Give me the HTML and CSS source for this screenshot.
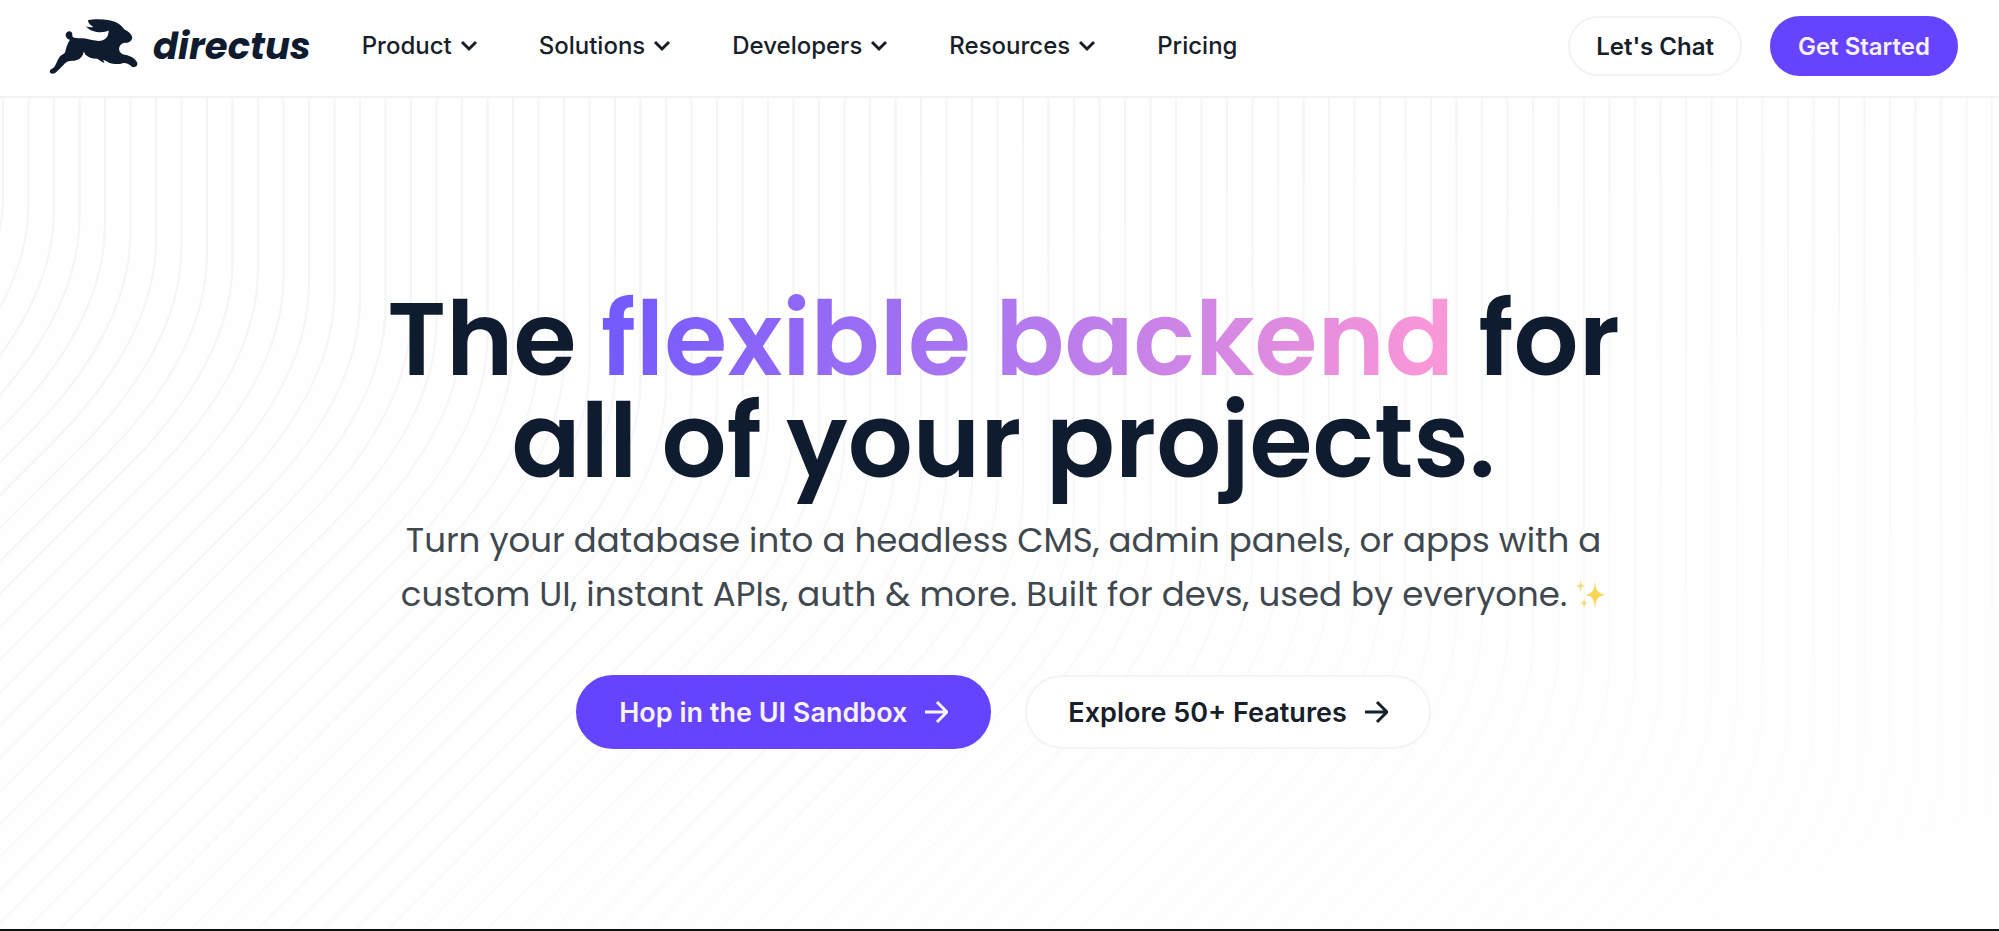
FILE: index.html
```
<!DOCTYPE html>
<html lang="en">
	<head>
		<meta charset="UTF-8" />
		<meta name="viewport" content="width=device-width, initial-scale=1.0" />
		<title>Directus</title>
		<link rel="stylesheet" href="styles.css">
	</head>
	<body>
		<header class="site-header">
			<a class="logo" href="#">
				<svg class="logo-mark" viewBox="50 50 280 175" aria-hidden="true">
					<path d="M173 60 C190 56 216 56 238 60 C262 65 276 76 283 88 C296 94 305 102 307 112 C306 122 298 129 284 128 C274 130 268 137 267 146 C268 157 274 162 283 164 C301 166 316 175 322 188 C324 197 317 203 307 201 C297 192 286 187 276 190 C264 194 248 192 235 187 C229 183 223 181 219 179 C220 183 222 186 223 189 C212 185 207 179 202 176 C188 177 174 172 165 163 L161 154 L158 163 C152 175 142 182 128 182 C114 182 106 186 98 196 L78 216 C70 223 60 222 58 216 C58 210 62 207 68 205 C76 196 78 188 84 176 C90 166 98 163 104 158 C107 145 111 131 119 119 C111 117 106 111 106 104 C107 94 118 90 124 96 C128 101 124 107 128 111 C138 116 152 113 165 115 C183 118 203 126 218 120 C230 115 235 107 236 91 C226 95 214 98 199 95 C185 93 174 87 167 79 C175 81 183 82 189 80 C182 75 174 70 173 60 Z" />
				</svg>
				<span class="logo-text">directus</span>
			</a>
			<nav class="main-nav">
				<button class="nav-item" type="button">
					Product
					<svg class="chevron" viewBox="0 0 18 12" aria-hidden="true"><path d="M2 2 L9 9 L16 2" /></svg>
				</button>
				<button class="nav-item" type="button">
					Solutions
					<svg class="chevron" viewBox="0 0 18 12" aria-hidden="true"><path d="M2 2 L9 9 L16 2" /></svg>
				</button>
				<button class="nav-item" type="button">
					Developers
					<svg class="chevron" viewBox="0 0 18 12" aria-hidden="true"><path d="M2 2 L9 9 L16 2" /></svg>
				</button>
				<button class="nav-item" type="button">
					Resources
					<svg class="chevron" viewBox="0 0 18 12" aria-hidden="true"><path d="M2 2 L9 9 L16 2" /></svg>
				</button>
				<a class="nav-item" href="#">Pricing</a>
			</nav>
			<div class="header-actions">
				<a class="btn btn-outline" href="#">Let's Chat</a>
				<a class="btn btn-primary" href="#">Get Started</a>
			</div>
		</header>

		<main class="hero">
			<svg class="hero-lines" id="hero-lines" aria-hidden="true"></svg>
			<div class="hero-content">
				<h1>The <span class="gradient-text">flexible backend</span> for<br />all of your projects.</h1>
				<p class="hero-sub">
					Turn your database into a headless CMS, admin panels, or apps with a<br />
					custom UI, instant APIs, auth &amp; more. Built for devs, used by everyone.
					<svg class="sparkles" viewBox="0 0 30 30" role="img" aria-label="sparkles">
						<path fill="#f7d65a" d="M19 2 C20 12 21 14 30 16 C21 17 20 20 19 30 C18 20 17 17 9 16 C17 14 18 12 19 2 Z" />
						<path fill="#f0e08a" d="M5 0 C5 5 6 6 9 7 C6 8 5 9 5 14 C4 9 4 8 0 7 C4 6 4 5 5 0 Z" />
						<path fill="#f0e08a" d="M8 19 C9 22 9 23 12 24 C9 25 9 26 8 30 C8 26 7 25 4 24 C7 23 8 22 8 19 Z" />
					</svg>
				</p>
				<div class="hero-actions">
					<a class="btn btn-large btn-primary" href="#">
						Hop in the UI Sandbox
						<svg class="arrow" viewBox="0 0 24 24" aria-hidden="true"><path d="M1 12 H22 M13 2 L23 12 L13 22" /></svg>
					</a>
					<a class="btn btn-large btn-outline" href="#">
						Explore 50+ Features
						<svg class="arrow" viewBox="0 0 24 24" aria-hidden="true"><path d="M1 12 H22 M13 2 L23 12 L13 22" /></svg>
					</a>
				</div>
			</div>
		</main>
		<script>
			// Vertical lines that bend off to the lower left
			const svg = document.getElementById("hero-lines");
			const gap = 25.5;

			function drawLines() {
				svg.innerHTML = "";
				for (let x = 3; x < window.innerWidth + 900; x += gap) {
					const bend = 96 + x * 0.29;
					const path = document.createElementNS("http://www.w3.org/2000/svg", "path");
					path.setAttribute("d", `M${x} 0 V${bend} c0 80 -50 150 -105 205 l-900 900`);
					svg.appendChild(path);
				}
			}

			drawLines();
			window.addEventListener("resize", drawLines);
		</script>
	</body>
</html>
```
FILE: styles.css
```
* {
	box-sizing: border-box;
}
body {
	margin: 0;
	min-height: 100vh;
	display: flex;
	flex-direction: column;
	background: #fefefe;
	color: #172029;
	font-family: Inter, sans-serif;
	border-bottom: 2px solid #111;
}
a {
	color: inherit;
	text-decoration: none;
}

/* Header */
.site-header {
	display: flex;
	align-items: center;
	padding: 16px 41px 20px 47px;
	background: #fff;
	border-bottom: 2px solid #f1f3f4;
}
.logo {
	display: flex;
	align-items: center;
	gap: 13px;
	color: #0f1c2f;
}
.logo-mark {
	width: 93px;
	height: 58px;
	fill: #0f1c2f;
}
.logo-text {
	font-family: Poppins, sans-serif;
	font-size: 37px;
	font-weight: 700;
	font-style: italic;
	line-height: 48px;
}
.main-nav {
	display: flex;
	align-items: center;
	gap: 61px;
	margin-left: 51px;
}
.nav-item {
	display: flex;
	align-items: center;
	gap: 8px;
	padding: 0;
	border: 0;
	background: none;
	color: inherit;
	font: 500 24px/30px Inter, sans-serif;
	cursor: pointer;
}
.chevron {
	width: 18px;
	height: 12px;
	fill: none;
	stroke: currentColor;
	stroke-width: 3;
}
.header-actions {
	display: flex;
	gap: 28px;
	margin-left: auto;
}

/* Buttons */
.btn {
	display: flex;
	align-items: center;
	height: 60px;
	padding: 0 26px;
	border: 2px solid transparent;
	border-radius: 40px;
	font-size: 24px;
	font-weight: 600;
	white-space: nowrap;
}
.btn-primary {
	background: #6644ff;
	border-color: #6644ff;
	color: #f6f3ff;
}
.btn-outline {
	background: #fff;
	border-color: #f2f3f4;
}
.btn-large {
	gap: 17px;
	height: 74px;
	padding: 0 41px;
	font-size: 27px;
}
.arrow {
	width: 24px;
	height: 24px;
	fill: none;
	stroke: currentColor;
	stroke-width: 3;
}

/* Hero */
.hero {
	position: relative;
	flex: 1;
	padding: 191px 0 178px 8px;
	overflow: hidden;
}
.hero-lines {
	position: absolute;
	top: 0;
	left: 0;
	width: 100%;
	height: 100%;
	fill: none;
	stroke: #f2f5f5;
	stroke-width: 2;
	mask-image: linear-gradient(165deg, #000 20%, transparent 95%);
}
.hero-content {
	position: relative;
	text-align: center;
}
h1 {
	margin: 0;
	color: #0f1c2f;
	font-family: Poppins, Inter, sans-serif;
	font-size: 102px;
	font-weight: 600;
	line-height: 102px;
}
.gradient-text {
	background: linear-gradient(100deg, #7158ff, #b47aee 50%, #ff99d6);
	background-clip: text;
	-webkit-background-clip: text;
	color: transparent;
}
.hero-sub {
	margin: 20px 0 54px;
	color: #3f484f;
	font-family: Poppins, Inter, sans-serif;
	font-size: 34px;
	line-height: 54px;
}
.sparkles {
	width: 30px;
	height: 30px;
	vertical-align: -3px;
}
.hero-actions {
	display: flex;
	justify-content: center;
	gap: 34px;
}
```
